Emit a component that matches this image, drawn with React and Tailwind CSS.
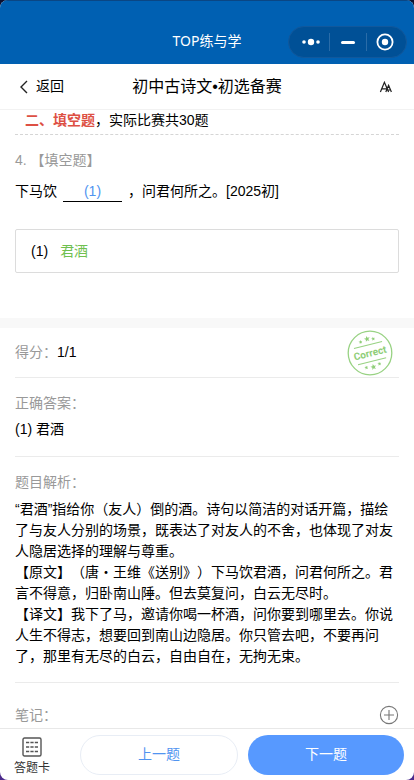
import React from 'react';

const analysis = [
  '“君酒”指给你（友人）倒的酒。诗句以简洁的对话开篇，描绘了与友人分别的场景，既表达了对友人的不舍，也体现了对友人隐居选择的理解与尊重。',
  '【原文】（唐・王维《送别》）下马饮君酒，问君何所之。君言不得意，归卧南山陲。但去莫复问，白云无尽时。',
  '【译文】我下了马，邀请你喝一杯酒，问你要到哪里去。你说人生不得志，想要回到南山边隐居。你只管去吧，不要再问了，那里有无尽的白云，自由自在，无拘无束。',
];

const STAR = 'M0-3.4.9-1.1 3.3-1 1.4.5 2 2.9 0 1.6-2 2.9-1.4.5-3.3-1-.9-1.1z';

function CorrectStamp() {
  return (
    <svg viewBox="0 0 48 48" className="w-12 h-12" role="img" aria-label="Correct">
      <circle cx="24" cy="24" r="21.8" fill="none" stroke="#98d283" strokeWidth="1.3" />
      <g transform="rotate(-14 24 24)" fill="#8fce78">
        <path d="M9.5 15.8h29M9.5 32.6h29" stroke="#98d283" strokeWidth="1" />
        <path d={STAR} transform="translate(24.5 9.6) scale(.9)" />
        <path d={STAR} transform="translate(17.5 11) scale(.6)" />
        <path d={STAR} transform="translate(30.5 11) scale(.6)" />
        <path d={STAR} transform="translate(24 38.4) scale(.9)" />
        <path d={STAR} transform="translate(17 37.2) scale(.6)" />
        <path d={STAR} transform="translate(30.5 36.8) scale(.6)" />
        <text x="24" y="27.6" textAnchor="middle" fontSize="10" fontWeight="700" fontFamily="Roboto, sans-serif">Correct</text>
      </g>
    </svg>
  );
}

function Capsule() {
  return (
    <div className="absolute right-[7px] top-[25px] flex h-8 w-[119px] items-center rounded-full border border-[#11589c] bg-[#005096] pl-1 pr-[3px]">
      <button aria-label="更多" className="flex flex-1 justify-center">
        <svg viewBox="0 0 20 8" className="h-2 w-5" fill="#fff">
          <circle cx="3" cy="4" r="1.8" />
          <circle cx="10" cy="4" r="3.2" />
          <circle cx="17" cy="4" r="1.8" />
        </svg>
      </button>
      <span className="h-[18px] w-px bg-[#2a6ca8]" />
      <button aria-label="最小化" className="flex flex-1 justify-center">
        <span className="h-[3px] w-[14px] rounded-full bg-white" />
      </button>
      <span className="h-[18px] w-px bg-[#2a6ca8]" />
      <button aria-label="关闭" className="flex flex-1 justify-center">
        <svg viewBox="0 0 18 18" className="size-[18px]">
          <circle cx="9" cy="9" r="7.6" fill="none" stroke="#fff" strokeWidth="1.8" />
          <circle cx="9" cy="9" r="3.2" fill="#fff" />
        </svg>
      </button>
    </div>
  );
}

export default function App() {
  return (
    <div className="h-screen bg-linear-to-b from-[#0b1030] to-[#4b2a8c]">
      <div className="flex h-full flex-col overflow-hidden rounded-lg bg-white font-['Liberation_Sans','Noto_Sans_CJK_SC',sans-serif] text-sm leading-[21px] text-black [text-spacing-trim:space-all]">
        {/* Title bar */}
        <header className="relative h-16 shrink-0 border-t border-[#0a4684] bg-[#0060b2]">
          <h1 className="pt-[29px] text-center font-['Noto_Sans','Noto_Sans_CJK_SC',sans-serif] text-white">TOP练与学</h1>
          <Capsule />
        </header>

        {/* Nav */}
        <nav className="grid h-[46px] shrink-0 grid-cols-[1fr_auto_1fr] items-center border-b border-[#f2f2f2] px-5">
          <button className="flex items-center gap-2">
            <svg viewBox="0 0 8 14" className="h-[14px] w-2" fill="none" stroke="#222" strokeWidth="1.4">
              <path d="M7 1 1 7l6 6" />
            </svg>
            返回
          </button>
          <h2 className="text-base">初中古诗文•初选备赛</h2>
          <button aria-label="字体大小" className="justify-self-end">
            <svg viewBox="0 0 16 14" className="h-[14px] w-4" fill="none" stroke="#222" strokeWidth="1.2">
              <path d="M2.4 12 6.4 2.2 10.6 12M3.8 8.8h5M7.8 12l2.8-6.6L13.4 12M8.8 10h3.6" />
            </svg>
          </button>
        </nav>

        <main className="min-h-0 flex-1 overflow-hidden">
          <section className="px-[15px]">
            <p className="border-b border-dashed border-[#d5d5d5] pb-[3px] pl-[10px]">
              <b className="text-[#dd5044]">二、填空题</b>，实际比赛共30题
            </p>
            <p className="mt-[15px] text-[#999]">4. 【填空题】</p>
            <p className="mt-[10px]">
              下马饮
              <span className="mx-[6px] inline-block w-[59px] border-b border-black text-center leading-5 text-[#5194f0]">(1)</span>
              ，问君何所之。[2025初]
            </p>
            <div className="mt-[27px] flex h-11 items-center gap-3 rounded-xs border border-[#dcdcdc] px-[15px]">
              <span>(1)</span>
              <span className="text-[#70c050]">君酒</span>
            </div>
          </section>

          <div className="mt-[45px] h-[10px] bg-[#f8f8f8]" />

          <div className="px-[15px]">
            <section className="flex h-[50px] items-center justify-between border-b border-[#ebebeb]">
              <p><span className="text-[#999]">得分：</span>1/1</p>
              <div className="mr-[5px]"><CorrectStamp /></div>
            </section>
            <section className="border-b border-[#ebebeb] pt-[15px] pb-4">
              <h3 className="text-[#999]">正确答案：</h3>
              <p className="mt-[5px]">(1) 君酒</p>
            </section>
            <section className="border-b border-[#ebebeb] py-[15px]">
              <h3 className="mb-[6px] text-[#999]">题目解析：</h3>
              {analysis.map((text) => <p key={text}>{text}</p>)}
            </section>
            <section className="flex items-start justify-between pt-[22px]">
              <h3 className="text-[#999]">笔记：</h3>
              <button aria-label="添加笔记">
                <svg viewBox="0 0 20 20" className="size-5" fill="none" stroke="#777" strokeWidth="1.1">
                  <circle cx="10" cy="10" r="8.6" />
                  <path d="M10 5v10M5 10h10" />
                </svg>
              </button>
            </section>
          </div>
        </main>

        {/* Bottom actions */}
        <footer className="flex h-[52px] shrink-0 items-center gap-[10px] border-t border-[#e8e8e8] pr-[10px]">
          <button className="mr-[10px] flex w-[60px] shrink-0 flex-col items-center gap-[3px] pl-1 pt-[3px] text-xs leading-4 text-[#333]">
            <svg viewBox="0 0 20 20" className="size-5" fill="none" stroke="#555" strokeWidth="1.4">
              <rect x="1" y="1" width="18" height="18" rx="1.5" />
              <path d="M4 5.5h12M4 10h12M4 14.5h12" strokeDasharray="3.2 1.2" />
            </svg>
            答题卡
          </button>
          <button className="h-10 flex-1 rounded-full border border-[#e8edf5] text-[#5194f0]">上一题</button>
          <button className="h-10 flex-1 rounded-full bg-[#5799ff] text-white">下一题</button>
        </footer>
      </div>
    </div>
  );
}
